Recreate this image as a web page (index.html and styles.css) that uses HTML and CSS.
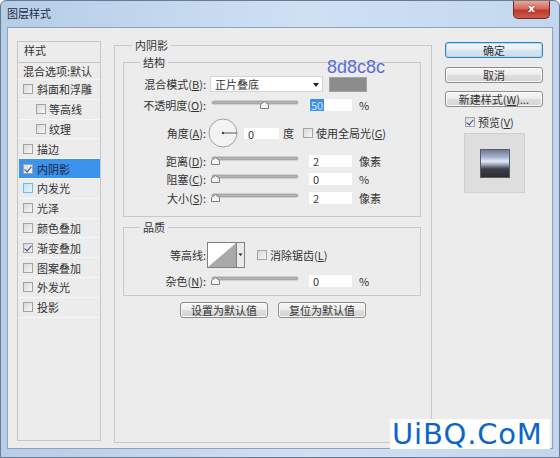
FILE: index.html
```html
<!DOCTYPE html>
<html lang="zh-CN">
<head>
  <meta charset="UTF-8">
  <title>图层样式</title>
  <link rel="stylesheet" href="styles.css">
</head>
<body>
  <div class="window">
    <div class="titlebar">
      <span class="title">图层样式</span>
      <span class="close">x</span>
    </div>

    <div class="client">
      <!-- left: style list -->
      <div class="styles-list">
        <div class="list-head">样式</div>
        <div class="item blend">混合选项:默认</div>
        <div class="item"><span class="check"></span>斜面和浮雕</div>
        <div class="item sub"><span class="check"></span>等高线</div>
        <div class="item sub"><span class="check"></span>纹理</div>
        <div class="item"><span class="check"></span>描边</div>
        <div class="item active"><span class="check on"></span>内阴影</div>
        <div class="item"><span class="check hover"></span>内发光</div>
        <div class="item"><span class="check"></span>光泽</div>
        <div class="item"><span class="check"></span>颜色叠加</div>
        <div class="item"><span class="check on"></span>渐变叠加</div>
        <div class="item"><span class="check"></span>图案叠加</div>
        <div class="item"><span class="check"></span>外发光</div>
        <div class="item"><span class="check"></span>投影</div>
      </div>

      <!-- middle: inner shadow settings -->
      <fieldset class="group main-group">
        <legend>内阴影</legend>

        <fieldset class="group sub-group structure">
          <legend>结构</legend>

          <div class="row row-mode">
            <span class="label">混合模式(<u>B</u>):</span>
            <div class="select">正片叠底<span class="arrow"></span></div>
            <div class="swatch"><span class="hex">8d8c8c</span></div>
          </div>

          <div class="row row-gap5">
            <span class="label">不透明度(<u>O</u>):</span>
            <svg class="slider" width="90" height="16" viewBox="0 0 90 16">
              <rect x="2" y="4" width="86" height="3" rx="1.5" fill="#b4b4b4" stroke="#8f8f8f" stroke-width="0.6"/>
              <path d="M50.5 11.5 V7.5 L54.5 4.5 L58.5 7.5 V11.5 Z" fill="#f4f4f4" stroke="#7d7d7d"/>
            </svg>
            <span class="field"><span class="sel">50</span></span>
            <span class="unit">%</span>
          </div>

          <div class="row row-angle">
            <span class="label">角度(<u>A</u>):</span>
            <svg class="dial" width="32" height="30" viewBox="0 0 32 30">
              <circle cx="15" cy="15" r="14" fill="#f3f3f3" stroke="#a0a0a0"/>
              <line x1="15" y1="15" x2="29" y2="15" stroke="#555" stroke-width="1"/>
              <circle cx="15" cy="15" r="1.2" fill="#444"/>
            </svg>
            <span class="field angle">0</span>
            <span class="deg">度</span>
            <span class="check global"></span>
            <span class="opt">使用全局光(<u>G</u>)</span>
          </div>

          <div class="row row-gap5">
            <span class="label">距离(<u>D</u>):</span>
            <svg class="slider" width="90" height="16" viewBox="0 0 90 16">
              <rect x="2" y="4" width="86" height="3" rx="1.5" fill="#b4b4b4" stroke="#8f8f8f" stroke-width="0.6"/>
              <path d="M1.5 11.5 V7.5 L5.5 4.5 L9.5 7.5 V11.5 Z" fill="#f4f4f4" stroke="#7d7d7d"/>
            </svg>
            <span class="field">2</span>
            <span class="unit">像素</span>
          </div>

          <div class="row row-gap2">
            <span class="label">阻塞(<u>C</u>):</span>
            <svg class="slider" width="90" height="16" viewBox="0 0 90 16">
              <rect x="2" y="4" width="86" height="3" rx="1.5" fill="#b4b4b4" stroke="#8f8f8f" stroke-width="0.6"/>
              <path d="M1.5 11.5 V7.5 L5.5 4.5 L9.5 7.5 V11.5 Z" fill="#f4f4f4" stroke="#7d7d7d"/>
            </svg>
            <span class="field">0</span>
            <span class="unit">%</span>
          </div>

          <div class="row row-gap3">
            <span class="label">大小(<u>S</u>):</span>
            <svg class="slider" width="90" height="16" viewBox="0 0 90 16">
              <rect x="2" y="4" width="86" height="3" rx="1.5" fill="#b4b4b4" stroke="#8f8f8f" stroke-width="0.6"/>
              <path d="M1.5 11.5 V7.5 L5.5 4.5 L9.5 7.5 V11.5 Z" fill="#f4f4f4" stroke="#7d7d7d"/>
            </svg>
            <span class="field">2</span>
            <span class="unit">像素</span>
          </div>
        </fieldset>

        <fieldset class="group sub-group quality">
          <legend>品质</legend>

          <div class="row row-contour">
            <span class="label">等高线:</span>
            <svg class="contour" width="38" height="26" viewBox="0 0 38 26">
              <rect x="0.5" y="0.5" width="37" height="25" fill="#fff" stroke="#808080"/>
              <path d="M1 25 L29 1 V25 Z" fill="#a9a9a9"/>
              <rect x="29.5" y="0.5" width="8" height="25" fill="#ebebeb" stroke="#808080"/>
              <path d="M31.5 11.5 H35.5 L33.5 14 Z" fill="#222"/>
            </svg>
            <span class="check aa"></span>
            <span class="opt">消除锯齿(<u>L</u>)</span>
          </div>

          <div class="row row-gap5">
            <span class="label">杂色(<u>N</u>):</span>
            <svg class="slider" width="90" height="16" viewBox="0 0 90 16">
              <rect x="2" y="4" width="86" height="3" rx="1.5" fill="#b4b4b4" stroke="#8f8f8f" stroke-width="0.6"/>
              <path d="M1.5 11.5 V7.5 L5.5 4.5 L9.5 7.5 V11.5 Z" fill="#f4f4f4" stroke="#7d7d7d"/>
            </svg>
            <span class="field">0</span>
            <span class="unit">%</span>
          </div>
        </fieldset>

        <div class="defaults">
          <span class="btn">设置为默认值</span>
          <span class="btn">复位为默认值</span>
        </div>
      </fieldset>

      <!-- right: buttons and preview -->
      <div class="side">
        <span class="btn wide default">确定</span>
        <span class="btn wide">取消</span>
        <span class="btn wide">新建样式(<u>W</u>)...</span>
        <div class="preview-toggle"><span class="check on"></span>预览(<u>V</u>)</div>
        <div class="preview">
          <div class="preview-swatch"></div>
        </div>
      </div>
    </div>

    <div class="watermark">UiBQ.CoM</div>
  </div>
</body>
</html>
```

FILE: styles.css
```css
body {
  margin: 0;
  width: 560px;
  height: 458px;
  overflow: hidden;
  background: #fff;
  font-family: "Noto Sans CJK SC", "Liberation Sans", sans-serif;
  font-size: 11px;
  color: #333;
}

.window {
  position: relative;
  box-sizing: border-box;
  width: 560px;
  height: 458px;
  border: 1px solid #6a7b91;
  border-radius: 6px 6px 0 0;
  background: linear-gradient(to right, #b6cde8, #cfe0f3 55%, #c2d7ee);
  display: flex;
  flex-direction: column;
}

/* title bar */
.titlebar {
  height: 26px;
  flex: none;
  display: flex;
  align-items: flex-start;
  padding-left: 6px;
}

.title {
  margin-top: 5px;
  line-height: 14px;
  color: #1c2b42;
}

.close {
  margin-left: auto;
  margin-right: 9px;
  width: 37px;
  height: 18px;
  box-sizing: border-box;
  border: 1px solid #6e2a22;
  border-top: none;
  border-radius: 0 0 5px 5px;
  background: linear-gradient(#e8a898, #d36a5c 45%, #bc3a2d 55%, #cd5b4c);
  color: #fff;
  font: bold 11px "DejaVu Sans", sans-serif;
  line-height: 16px;
  text-align: center;
  text-shadow: 0 0 2px #6e1a12;
}

/* client area */
.client {
  flex: 1;
  margin: 0 6px 8px;
  padding: 9px 0 0 9px;
  background: #ececec;
  border: 1px solid #8ea2ba;
  display: flex;
  align-items: flex-start;
}

/* left list */
.styles-list {
  margin-top: 4px;
  width: 84px;
  height: 400px;
  box-sizing: border-box;
  border: 1px solid #c6c6c6;
  flex: none;
}

.list-head {
  height: 21px;
  box-sizing: border-box;
  border-bottom: 1px solid #c6c6c6;
  padding: 1px 0 0 6px;
  line-height: 14px;
}

.item {
  height: 19.8px;
  box-sizing: border-box;
  display: flex;
  align-items: center;
  padding-left: 5px;
  border-bottom: 1px solid #f7f7f7;
  white-space: nowrap;
}

.item.blend {
  height: 17px;
  padding-left: 5px;
}

.item.sub {
  padding-left: 18px;
}

.item.active {
  background: #3b93ec;
  margin: 0 0 0 1px;
  padding-left: 4px;
  color: #1a2340;
}

.item .check {
  margin-right: 4px;
}

.item.sub .check {
  margin-right: 3px;
}

/* checkbox */
.check {
  position: relative;
  flex: none;
  width: 10px;
  height: 10px;
  box-sizing: border-box;
  border: 1px solid #a3a3a3;
  background: linear-gradient(135deg, #d9d9d9, #f7f7f7);
}

.check.on::after {
  content: "";
  position: absolute;
  left: 2px;
  top: 0;
  width: 3px;
  height: 6px;
  border-right: 1.5px solid #2e3f8e;
  border-bottom: 1.5px solid #2e3f8e;
  transform: rotate(40deg);
}

.check.hover {
  border-color: #79b7e4;
  background: linear-gradient(135deg, #bde3f8, #e9f6fd);
}

/* group boxes */
.group {
  margin: 0;
  border: 1px solid #c9c9c9;
  min-width: 0;
}

.group legend {
  padding: 0 3px;
  line-height: 16px;
}

.main-group {
  margin-left: 13px;
  width: 318px;
  height: 406px;
  box-sizing: border-box;
  padding: 0 10px 0 8px;
  flex: none;
}

.main-group > legend {
  margin-left: 9px;
}

.sub-group {
  padding: 0;
}

.sub-group > legend {
  margin-left: 16px;
}

.structure {
  margin-top: 1px;
  padding-bottom: 10px;
}

.quality {
  margin-top: 2px;
  padding-bottom: 6px;
}

/* rows */
.row {
  display: flex;
  align-items: center;
  height: 16px;
  white-space: nowrap;
}

.label {
  flex: none;
  width: 82px;
  margin-right: 4px;
  text-align: right;
}

.row-mode { margin-top: 6px; }
.row-gap5 { margin-top: 5px; }
.row-gap3 { margin-top: 3px; }
.row-gap2 { margin-top: 2px; }

.row-angle {
  height: 30px;
  margin-top: 5px;
}

.row-contour {
  height: 26px;
  margin-top: 7px;
}

.select {
  position: relative;
  width: 113px;
  height: 16px;
  box-sizing: border-box;
  border: 1px solid #d4d4d4;
  background: #fff;
  padding-left: 4px;
  line-height: 14px;
}

.select .arrow {
  position: absolute;
  right: 3px;
  top: 6px;
  border-left: 3px solid transparent;
  border-right: 3px solid transparent;
  border-top: 4px solid #222;
}

.swatch {
  position: relative;
  margin-left: 6px;
  width: 38px;
  height: 15px;
  box-sizing: border-box;
  border: 1px solid #a3a3a3;
  background: #8d8c8c;
}

/* annotation above the colour swatch */
.swatch .hex {
  position: absolute;
  left: -3px;
  top: -20px;
  font: 18px/18px "Liberation Sans", sans-serif;
  color: #5b6ed6;
}

.slider {
  flex: none;
  display: block;
}

.field {
  flex: none;
  margin-left: 8px;
  width: 45px;
  height: 14px;
  box-sizing: border-box;
  background: #fff;
  border: 1px solid #ebebeb;
  padding-left: 4px;
  line-height: 12px;
}

.field .sel {
  display: inline-block;
  margin-left: -3px;
  padding: 0 1px;
  background: #3f8fe6;
  color: #cfe6ff;
}

.unit {
  margin-left: 6px;
}

.dial {
  flex: none;
  display: block;
  margin-left: -2px;
}

.field.angle {
  margin-left: 3px;
  width: 37px;
  height: 13px;
}

.deg {
  margin-left: 3px;
}

.check.global {
  margin-left: 9px;
}

.opt {
  margin-left: 3px;
}

.contour {
  flex: none;
  display: block;
  margin-left: -3px;
}

.check.aa {
  margin-left: 12px;
}

.defaults {
  display: flex;
  justify-content: center;
  gap: 10px;
  margin-top: 6px;
  padding-left: 2px;
}

/* buttons */
.btn {
  display: block;
  width: 88px;
  height: 16px;
  box-sizing: border-box;
  border: 1px solid #8c8c8c;
  border-radius: 3px;
  background: linear-gradient(#f7f7f7, #ececec 50%, #dedede 51%, #d3d3d3);
  box-shadow: inset 0 0 0 1px #fbfbfb;
  line-height: 14px;
  text-align: center;
  white-space: nowrap;
}

/* right column */
.side {
  flex: none;
  margin-left: 13px;
  margin-top: 5px;
  width: 98px;
  display: flex;
  flex-direction: column;
}

.btn.wide {
  width: 98px;
  margin-bottom: 8.5px;
}

.btn.default {
  border-color: #3a7fb4;
  background: linear-gradient(#f1f7fb, #e6eef4 50%, #d8e4ed 51%, #cfdde8);
  box-shadow: inset 0 0 0 1px #a8dff8;
}

.preview-toggle {
  display: flex;
  align-items: center;
  height: 12px;
  margin-top: 0.5px;
  padding-left: 20px;
}

.preview-toggle .check {
  margin-right: 3px;
}

.preview {
  margin: 5px 0 0 19px;
  width: 61px;
  height: 60px;
  box-sizing: border-box;
  border: 1px solid #cfcfcf;
  background: #dedede;
  display: flex;
  align-items: center;
  justify-content: center;
}

.preview-swatch {
  width: 30px;
  height: 29px;
  box-sizing: border-box;
  border: 1px solid #5a5d66;
  background: linear-gradient(#6f7891, #a9b8d9 28%, #e4ebf8 42%, #9a9fae 55%, #3d4049 70%, #2b2d34);
}

/* site watermark over the corner */
.watermark {
  position: absolute;
  right: 9px;
  bottom: 8px;
  width: 160px;
  height: 30px;
  background: #fff;
  color: #0c66c9;
  font: 29px/30px "DejaVu Sans", sans-serif;
  letter-spacing: 0.8px;
  padding-left: 2px;
  box-sizing: border-box;
  white-space: nowrap;
}
```
